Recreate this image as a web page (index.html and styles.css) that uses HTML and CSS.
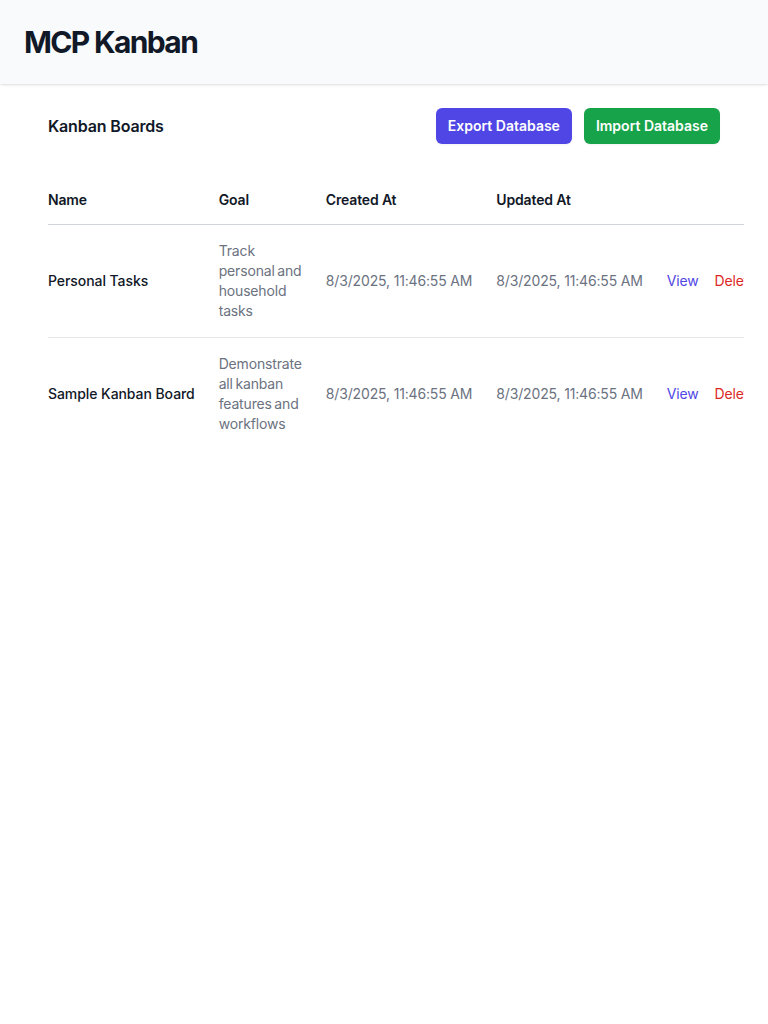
FILE: index.html
```html
<!DOCTYPE html>
<html lang="en">
<head>
<meta charset="utf-8">
<title>MCP Kanban</title>
<link rel="stylesheet" href="styles.css">
</head>
<body>
<header class="topbar">
  <h1 class="app-title">MCP Kanban</h1>
</header>
<main class="main">
  <div class="section">
    <div class="section-head">
      <h2 class="section-title">Kanban Boards</h2>
      <div class="actions">
        <button class="btn btn-indigo" type="button">Export Database</button>
        <button class="btn btn-green" type="button">Import Database</button>
      </div>
    </div>
    <div class="table-root">
      <div class="table-scroll">
        <div class="table-inner">
          <table class="boards">
            <thead>
              <tr>
                <th class="col-name">Name</th>
                <th>Goal</th>
                <th>Created At</th>
                <th>Updated At</th>
                <th class="col-actions"></th>
              </tr>
            </thead>
            <tbody>
              <tr>
                <td class="cell-name">Personal Tasks</td>
                <td class="cell-goal">Track personal and household tasks</td>
                <td class="cell-date">8/3/2025, 11:46:55 AM</td>
                <td class="cell-date">8/3/2025, 11:46:55 AM</td>
                <td class="cell-actions"><a class="link-view" href="#">View</a><a class="link-delete" href="#">Delete</a></td>
              </tr>
              <tr>
                <td class="cell-name">Sample Kanban Board</td>
                <td class="cell-goal">Demonstrate all kanban features and workflows</td>
                <td class="cell-date">8/3/2025, 11:46:55 AM</td>
                <td class="cell-date">8/3/2025, 11:46:55 AM</td>
                <td class="cell-actions"><a class="link-view" href="#">View</a><a class="link-delete" href="#">Delete</a></td>
              </tr>
            </tbody>
          </table>
        </div>
      </div>
    </div>
  </div>
</main>
</body>
</html>
```

FILE: styles.css
```css
* { box-sizing: border-box; }
html, body { margin: 0; padding: 0; }
body {
  font-family: Inter, "Noto Sans", "Liberation Sans", sans-serif;
  letter-spacing: -0.01em;
  color: #111827;
  background: #ffffff;
  overflow: hidden;
}
.topbar {
  background: #f9fafb;
  padding: 24px;
  box-shadow: 0 1px 3px 0 rgba(0,0,0,0.1), 0 1px 2px -1px rgba(0,0,0,0.1);
  position: relative;
}
.app-title {
  margin: 0;
  font-size: 30px;
  line-height: 36px;
  font-weight: 700;
  letter-spacing: -0.055em;
  color: #111827;
}
.main {
  padding: 24px;
}
.section {
  padding: 0 24px;
}
.section-head {
  display: flex;
  align-items: center;
  justify-content: space-between;
}
.section-title {
  margin: 0;
  font-size: 16px;
  line-height: 24px;
  font-weight: 600;
  color: #111827;
}
.actions {
  display: flex;
  gap: 12px;
}
.btn {
  border: 0;
  border-radius: 6px;
  padding: 8px 12px;
  font-family: inherit;
  font-size: 14px;
  line-height: 20px;
  font-weight: 600;
  letter-spacing: normal;
  color: #ffffff;
  box-shadow: 0 1px 2px 0 rgba(0,0,0,0.05);
  cursor: pointer;
}
.btn-indigo { background: #4f46e5; }
.btn-green { background: #16a34a; }
.table-root {
  margin-top: 32px;
}
.table-scroll {
  margin: -8px -24px;
  overflow-x: auto;
  scrollbar-width: none;
}
.table-scroll::-webkit-scrollbar { display: none; }
.table-inner {
  display: inline-block;
  min-width: 100%;
  padding: 8px 24px;
  vertical-align: middle;
}
.boards {
  min-width: 100%;
  border-collapse: collapse;
}
.boards th {
  padding: 14px 12px;
  text-align: left;
  font-size: 14px;
  line-height: 20px;
  font-weight: 600;
  color: #111827;
  white-space: nowrap;
}
.boards th.col-name { padding-left: 0; }
.boards thead tr { border-bottom: 1px solid #d1d5db; }
.boards tbody tr + tr { border-top: 1px solid #e5e7eb; }
.boards td {
  padding: 16px 12px;
  font-size: 14px;
  line-height: 20px;
  color: #6b7280;
  white-space: nowrap;
}
.boards td.cell-name {
  padding-left: 0;
  font-weight: 500;
  letter-spacing: -0.005em;
  color: #111827;
}
.boards td.cell-goal {
  white-space: normal;
  word-spacing: -1.2px;
}
.boards td.cell-actions {
  padding-left: 12px;
  padding-right: 0;
}
.link-view, .link-delete {
  text-decoration: none;
}
.link-view { color: #4f46e5; }
.link-delete { color: #dc2626; margin-left: 16px; }
```
